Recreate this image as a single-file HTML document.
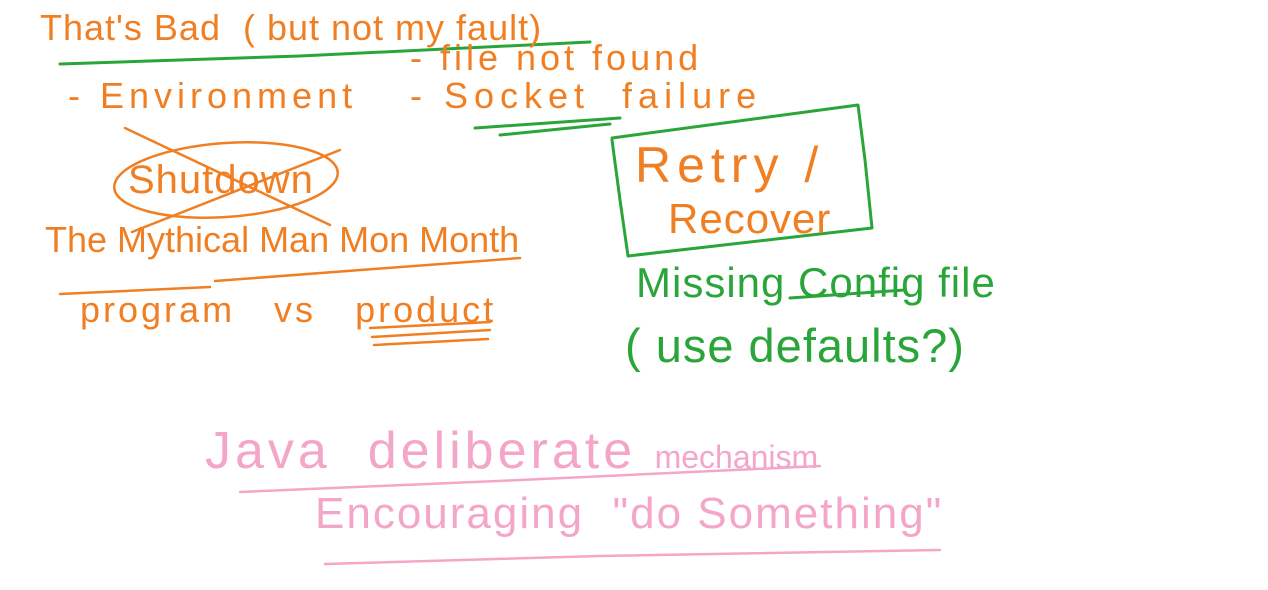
<!DOCTYPE html>
<html><head><meta charset="utf-8"><style>
html,body{margin:0;padding:0;background:#fff;width:1268px;height:590px;overflow:hidden;position:relative}
.t{position:absolute;font-family:"Liberation Sans",sans-serif;white-space:nowrap;line-height:1;font-weight:normal}
.o{color:#f07f23}.g{color:#2aa53a}.p{color:#f4a6c8}
svg{position:absolute;left:0;top:0}
</style></head><body>
<svg width="1268" height="590" fill="none" stroke-linecap="round" stroke-linejoin="round">
<g stroke="#2aa53a" stroke-width="3">
<path d="M60 64 L300 56 L590 42"/>
<path d="M475 128 L620 118 M500 135 L610 124"/>
<path d="M612 140 L620 200 L628 256 L872 228 L865 160 L858 105 L612 138"/>
<path d="M790 298 L905 290"/>
</g>
<g stroke="#f07f23" stroke-width="2.5">
<ellipse cx="226" cy="180" rx="112" ry="37" transform="rotate(-4 226 180)"/>
<path d="M125 128 L330 225 M132 232 L340 150"/>
<path d="M60 294 L210 287 M215 281 L520 258"/>
<path d="M370 328 L490 322 M372 337 L490 330 M374 345 L488 339"/>
</g>
<g stroke="#f4a6c8" stroke-width="2.5">
<path d="M240 492 L520 480 L820 466"/>
<path d="M325 564 L600 556 L940 550"/>
</g>
</svg>
<div class="t o" style="left:40px;top:10px;font-size:36px;letter-spacing:1px">That's Bad&nbsp; ( but not my fault)</div>
<div class="t o" style="left:68px;top:78px;font-size:36px;letter-spacing:5px">- Environment</div>
<div class="t o" style="left:410px;top:40px;font-size:36px;letter-spacing:4px">- file not found</div>
<div class="t o" style="left:410px;top:78px;font-size:36px;letter-spacing:6px">- Socket&nbsp; failure</div>
<div class="t o" style="left:128px;top:160px;font-size:40px;letter-spacing:1px">Shutdown</div>
<div class="t o" style="left:635px;top:140px;font-size:50px;letter-spacing:6px">Retry /</div>
<div class="t o" style="left:668px;top:198px;font-size:42px;letter-spacing:1px">Recover</div>
<div class="t o" style="left:45px;top:222px;font-size:36px;letter-spacing:0px">The Mythical Man Mon Month</div>
<div class="t o" style="left:80px;top:292px;font-size:36px;letter-spacing:3px">program&nbsp;&nbsp; vs&nbsp;&nbsp; product</div>
<div class="t g" style="left:636px;top:262px;font-size:42px;letter-spacing:1px">Missing Config file</div>
<div class="t g" style="left:625px;top:322px;font-size:47px;letter-spacing:1px">( use defaults?)</div>
<div class="t p" style="left:205px;top:425px;font-size:52px;letter-spacing:4px">Java&nbsp; deliberate <span style="font-size:32px;letter-spacing:0px">mechanism</span></div>
<div class="t p" style="left:315px;top:492px;font-size:44px;letter-spacing:2px">Encouraging&nbsp; "do Something"</div>
</body></html>
